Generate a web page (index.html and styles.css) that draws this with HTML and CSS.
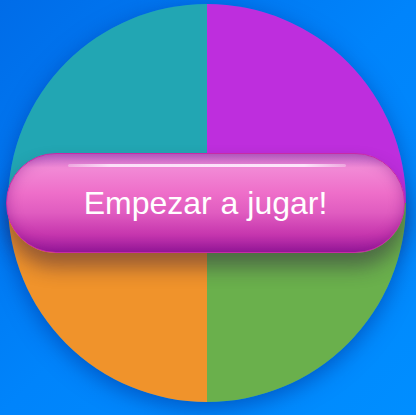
FILE: index.html
```html
<!DOCTYPE html>
<html lang="es">
<head>
<meta charset="utf-8">
<title>Ruleta</title>
<link rel="stylesheet" href="styles.css">
</head>
<body>
<main class="stage">
  <div class="wheel">
    <div class="slice slice-teal"></div>
    <div class="slice slice-purple"></div>
    <div class="slice slice-orange"></div>
    <div class="slice slice-green"></div>
    <button class="start-btn" type="button">Empezar a jugar!</button>
  </div>
</main>
</body>
</html>
```

FILE: styles.css
```css
html, body {
  margin: 0;
  padding: 0;
  width: 100%;
  height: 100%;
  overflow: hidden;
}

body {
  background: linear-gradient(135deg, #006ce8 0%, #0084fb 50%, #008eff 100%);
  font-family: "Liberation Sans", Arial, sans-serif;
}

.stage {
  box-sizing: border-box;
  width: 100%;
  height: 100%;
  padding: 4px 0 0 8px;
}

.wheel {
  position: relative;
  width: 398px;
  height: 398px;
  border-radius: 50%;
  display: grid;
  grid-template-columns: 1fr 1fr;
  grid-template-rows: 1fr 1fr;
  box-shadow: 0 6px 22px rgba(0, 40, 140, 0.5);
}

.slice-teal { background: #22a6b3; border-top-left-radius: 100% 100%; }
.slice-purple { background: #be2edd; border-top-right-radius: 100% 100%; }
.slice-orange { background: #f0932b; border-bottom-left-radius: 100% 100%; }
.slice-green { background: #6ab04c; border-bottom-right-radius: 100% 100%; }

.start-btn {
  position: absolute;
  left: -2px;
  top: 149px;
  width: 399px;
  height: 100px;
  box-sizing: border-box;
  border: 1px solid #c72aa6;
  border-radius: 50px;
  padding: 0;
  margin: 0;
  font-family: "Liberation Sans", Arial, sans-serif;
  font-size: 32px;
  color: #ffffff;
  background: linear-gradient(to bottom,
    #c06ccc 0%,
    #f28ad6 14%,
    #ee6ec9 40%,
    #e05cc0 60%,
    #c636ae 82%,
    #9a1a9c 100%);
  box-shadow:
    inset 0 0 14px rgba(120, 10, 130, 0.45),
    0 14px 20px rgba(40, 20, 60, 0.45);
  cursor: pointer;
}

.start-btn::before {
  content: "";
  position: absolute;
  left: 61px;
  right: 58px;
  top: 10px;
  height: 3px;
  border-radius: 2px;
  background: linear-gradient(to right,
    rgba(255, 255, 255, 0.3) 0%,
    rgba(255, 240, 255, 0.85) 15%,
    rgba(255, 240, 255, 0.9) 85%,
    rgba(255, 255, 255, 0.3) 100%);
}
```
